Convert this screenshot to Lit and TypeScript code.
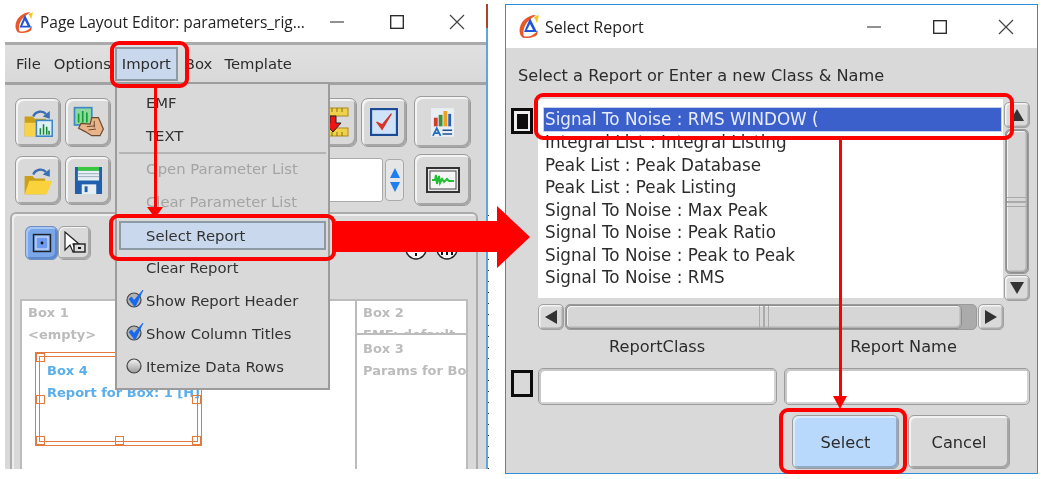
import { LitElement, html, css, svg } from "lit";
import { customElement } from "lit/decorators.js";

const logo = html`<svg class="logo" viewBox="0 0 20 23">
  <path d="M3 22C-1 18 0 10 5 5C8 2 12 0 17 0C13 3 8 6 6 11C4 15 4 19 5 23Z" fill="#e9562a"/>
  <path d="M3 20C7 23 14 22 19 15L18 20C14 23 7 24 3 22Z" fill="#e9562a"/>
  <path d="M11 3L18 17H5Z" fill="#1d55d6"/>
  <path d="M11 9L14 15H8Z" fill="#fff"/>
  <path d="M15 2L20 0L18 8Z" fill="#f6c81f"/>
</svg>`;

const folderBase = svg`<path d="M3 12h10l3 3h14v22H3Z" fill="#c9a01c"/><path d="M3 20h27v17H3Z" fill="#f7d24a"/>`;
const arc = svg`<path d="M14 12C17 5 26 4 30 9" fill="none" stroke="#3a6fb5" stroke-width="3"/><path d="M35 5v10l-9-3Z" fill="#3a6fb5"/>`;
const icFolderChart = html`<svg viewBox="0 0 40 38" width="32" height="30">${folderBase}${arc}
  <rect x="18" y="17" width="20" height="20" fill="#dff1f7" stroke="#3d87c4" stroke-width="2"/>
  <path d="M22 35V27h2v8ZM26 35V22h2v13ZM30 35V25h2v10ZM33 35V30h2v5Z" fill="#158a33"/></svg>`;
const icHand = html`<svg viewBox="0 0 40 40" width="33" height="33">
  <rect x="3" y="2" width="21" height="21" fill="#8fd8a0" stroke="#3d87c4" stroke-width="2"/>
  <path d="M7 20V9h2v11ZM12 20V6h2v14ZM17 20V8h2v12Z" fill="#12a035"/>
  <path d="M11 21L22 22L24 14H32L38 28L34 36H24L16 31L8 27Z" fill="#e9b48a" stroke="#6e4a30" stroke-width="1.5"/>
  <path d="M18 25L28 24M20 29L29 28M27 18V26" stroke="#6e4a30" stroke-width="1.2" fill="none"/></svg>`;
const icFolderOpen = html`<svg viewBox="0 0 40 38" width="32" height="30">
  <path d="M3 14h10l3 3h13v20H3Z" fill="#c9a01c"/><path d="M9 20H38L31 37H3Z" fill="#f9d23c"/>${arc}</svg>`;
const icFloppy = html`<svg viewBox="0 0 30 30" width="29" height="29">
  <path d="M1 1H29V29H1Z" fill="#1f5fae"/><rect x="4" y="1" width="22" height="4" fill="#3ac63f"/><rect x="4" y="5" width="22" height="10" fill="#e6f0f4"/>
  <path d="M4 8H26M4 11H26" stroke="#9ab" stroke-width="1"/><rect x="8" y="19" width="15" height="10" fill="#e6eef4"/><rect x="11" y="21" width="3" height="6" fill="#1f5fae"/></svg>`;
const icRuler = html`<svg viewBox="0 0 32 34" width="32" height="34">
  <rect x="0" y="3" width="30" height="8" fill="#f0d24a" stroke="#a88a20"/><rect x="0" y="23" width="30" height="8" fill="#f0d24a" stroke="#a88a20"/>
  <path d="M4 3v4M9 3v4M14 3v4M19 3v4M24 3v4M4 27v4M9 27v4M14 27v4M19 27v4M24 27v4" stroke="#8a7010"/>
  <path d="M12 11h6v7h5l-8 9-8-9h5Z" fill="#f01414" stroke="#222"/></svg>`;
const icCheck = html`<svg viewBox="0 0 30 30" width="28" height="28">
  <rect x="1" y="1" width="28" height="28" fill="#cfe3f8" stroke="#1d4a94" stroke-width="2.6"/>
  <path d="M7 15L13 23L23 6L13 18Z" fill="#d8332a" stroke="#d8332a" stroke-width="1.2"/></svg>`;
const icBars = html`<svg viewBox="0 0 24 30" width="23" height="29">
  <rect x="0" y="0" width="24" height="30" fill="#e9eef6"/>
  <rect x="3" y="10" width="4" height="9" fill="#d23b30"/><rect x="8" y="7" width="4" height="12" fill="#3f8f3a"/><rect x="13" y="3" width="4" height="16" fill="#f0a020"/><rect x="18" y="6" width="3" height="13" fill="#2b5fb4"/>
  <path d="M2 29L6 21L10 29M4 26H8" fill="none" stroke="#1f6fc0" stroke-width="1.8"/><path d="M12 23H22M12 27H22" stroke="#1f4f90" stroke-width="1.6"/></svg>`;
const icWave = html`<svg viewBox="0 0 34 26" width="34" height="26">
  <rect x="1" y="1" width="32" height="24" fill="#e8e8e8" stroke="#333" stroke-width="2"/><rect x="4" y="4" width="26" height="18" fill="#f6f6f6" stroke="#444"/>
  <path d="M6 13H9L10 8L11 17L13 9L14 16L16 12L18 15L21 12L23 14H28" fill="none" stroke="#22c030" stroke-width="2"/></svg>`;
const icBoxMode = html`<svg viewBox="0 0 20 20" width="20" height="20">
  <rect x="1.500" y="1.500" width="17" height="17" fill="none" stroke="#222" stroke-width="1.4"/><rect x="4" y="4" width="12" height="12" fill="#6d9bf0" stroke="#dfe8fb"/><circle cx="10" cy="10" r="1.4" fill="#111"/></svg>`;
const icPointer = html`<svg viewBox="0 0 24 24" width="24" height="24">
  <path d="M2 1V19L7 14L10 21L13 20L10 13H16Z" fill="#fff" stroke="#222" stroke-width="1.2"/><rect x="11" y="13" width="11" height="8" fill="#ddd" stroke="#222" stroke-width="1.4"/><rect x="15" y="16" width="3" height="2" fill="#111"/></svg>`;
const icCheckItem = html`<svg viewBox="0 0 18 18" width="18" height="18">
  <circle cx="8" cy="10" r="7" fill="#b4b4b4" stroke="#444" stroke-width="1.2"/><path d="M3 9L5.500 7L8 10.500L17 0L9 17Z" fill="#1568f0" stroke="#1568f0" stroke-width="0.8"/></svg>`;
const icRadio = html`<svg viewBox="0 0 18 18" width="18" height="18">
  <defs><linearGradient id="rg" x1="0" y1="0" x2="0" y2="1"><stop offset="0" stop-color="#f4f4f4"/><stop offset="1" stop-color="#9a9a9a"/></linearGradient></defs>
  <circle cx="8" cy="10" r="7" fill="url(#rg)" stroke="#444" stroke-width="1.2"/></svg>`;
const icCircleA = html`<svg width="22" height="22" viewBox="0 0 22 22"><circle cx="11" cy="11" r="10" fill="#f4f4f4" stroke="#222" stroke-width="1.5"/><path d="M10 3h2v9h-2ZM10 15h2v3h-2Z" fill="#111"/></svg>`;
const icCircleB = html`<svg width="22" height="22" viewBox="0 0 22 22"><circle cx="11" cy="11" r="10" fill="#f4f4f4" stroke="#222" stroke-width="1.5"/><path d="M5 13h2v4H5ZM10 11h2v6h-2ZM15 13h2v4h-2Z" fill="#111"/></svg>`;
const winMin = html`<svg width="16" height="16" viewBox="0 0 16 16"><path d="M1 8H15" stroke="#555" stroke-width="1.300"/></svg>`;
const winMax = html`<svg width="14" height="14" viewBox="0 0 14 14"><rect x=".7" y=".7" width="12.6" height="12.6" fill="none" stroke="#222" stroke-width="1.3"/></svg>`;
const winClose = html`<svg width="16" height="16" viewBox="0 0 16 16"><path d="M1 1L15 15M15 1L1 15" stroke="#444" stroke-width="1.2"/></svg>`;
const tri = (d: string) => html`<svg width="16" height="16" viewBox="0 0 16 16"><path d="${d}" fill="#333"/></svg>`;

const items = [
  "Signal To Noise : RMS WINDOW (",
  "Integral List : Integral Listing",
  "Peak List : Peak Database",
  "Peak List : Peak Listing",
  "Signal To Noise : Max Peak",
  "Signal To Noise : Peak Ratio",
  "Signal To Noise : Peak to Peak",
  "Signal To Noise : RMS",
];

@customElement("app-root")
export class AppRoot extends LitElement {
  static styles = css`
    :host { display: block; width: 1043px; height: 479px; background: #fff; position: relative; overflow: hidden;
      font-family: "DejaVu Sans", sans-serif; font-size: 16.2px; color: #2c2c2c; }
    .stage { position: absolute; inset: 0; filter: blur(0.35px); }
    .win { position: absolute; display: flex; flex-direction: column; box-sizing: border-box; background: #fff; }
    .left { left: 0; top: 0; width: 486px; height: 469px; }
    .right { left: 505px; top: 4px; width: 533px; height: 470px; border: 1.5px solid #2a8fdf; }
    .edge { position: absolute; left: 486px; top: 4px; width: 2px; height: 465px; background: #62a5dc; }
    .edge-top { position: absolute; left: 486px; top: 4px; width: 2px; height: 24px; background: #a8432c; }
    .edge-dots { position: absolute; left: 488px; top: 215px; width: 1px; height: 254px;
      background: repeating-linear-gradient(#333 0 1px, transparent 1px 11px); }
    .title { display: flex; align-items: center; box-sizing: border-box; height: 42px; flex: none; padding: 2px 0 0 15px; gap: 7px;
      font-family: "Open Sans", sans-serif; font-size: 15.5px; color: #222; }
    .left .logo { width: 18px; height: 21px; }
    .right .logo { width: 20px; height: 23px; }
    .right .title { height: 43px; padding: 0 0 0 13px; gap: 6px; font-size: 16px; }
    .title .ctl { margin-left: auto; display: flex; align-items: center; }
    .left .ctl { gap: 45px; padding-right: 21px; }
    .right .ctl { gap: 51px; padding-right: 23px; }
    .left .body { margin-left: 5px; }
    .body { flex: 1; background: #d9d9d9; display: flex; flex-direction: column; min-height: 0; }
    .menubar { display: flex; align-items: center; flex: none; box-sizing: border-box; border-top: 3px solid #aaa; border-bottom: 3px solid #a2a2a2; padding-left: 11px; height: 43px; background: linear-gradient(#e0e0e0, #d9d9d9); font-size: 14.8px; }
    .menubar span { flex: none; }
    .menubar .m1 { margin-right: 13px; }
    .menubar .hl { width: 63px; height: 34px; box-sizing: border-box; margin: 0 7px 0 4px; display: flex; align-items: center; justify-content: center; background: #c9d8ec; border: 2px solid #8e9aa6; }
    .menubar .m2 { margin-right: 12px; }
    .toolbar { display: flex; flex-direction: column; gap: 6px; padding: 11px 15px 0 10px; flex: none; }
    .trow { display: flex; align-items: center; gap: 4px; height: 52px; }
    .btn { box-sizing: border-box; width: 46px; height: 49px; display: flex; align-items: center; justify-content: center; flex: none;
      background: #d9d9d9; border: 1px solid #9c9c9c; border-radius: 7px; box-shadow: inset 2px 2px 0 #f4f4f4, inset -2px -2px 0 #a6a6a6; overflow: hidden; }
    .btn.big { width: 57px; height: 52px; margin-left: 3px; }
    .grow { flex: 1; }
    .combo { flex: 1; height: 42px; background: #fff; border: 1px solid #aaa; border-radius: 3px; margin-right: -2px; }
    .spin { width: 19px; height: 42px; box-sizing: border-box; flex: none; background: #e6e6e6; border: 1px solid #aaa; border-radius: 4px; display: flex; align-items: center; justify-content: center; margin-right: 3px; }
    .panel { margin: 6px 8px 0 5px; flex: 1; min-height: 0; box-sizing: border-box; border: 2px solid #ababab; border-bottom: 0; border-radius: 6px 6px 0 0; box-shadow: inset 2px 2px 0 #eee; padding: 12px 8px 0 8px; display: flex; flex-direction: column; position: relative; }
    .toggles { display: flex; flex: none; height: 34px; padding-left: 5px; gap: 0; }
    .tg { box-sizing: border-box; width: 33px; height: 34px; display: flex; align-items: center; justify-content: center; border: 1px solid #a0a0a0; border-radius: 6px; background: #d9d9d9; box-shadow: inset 1px 1px 0 #f4f4f4, inset -2px -2px 0 #aaa; }
    .tg.on { background: #79a7ea; border-color: #6d8fc4; box-shadow: inset 2px 2px 0 #a6c6f4, inset -2px -2px 0 #5d88c8; }
    .circles { position: absolute; top: 24px; right: 18px; display: flex; gap: 9px; }
    .sheet { margin-top: 39px; flex: 1; min-height: 0; background: #fff; border: 2px solid #bcbcbc; border-bottom: 0; display: grid; grid-template-columns: 1fr 111px; position: relative; font-size: 13px; font-weight: 700; color: #bcbcbc; }
    .cell { padding: 1px 0 0 6px; line-height: 22px; overflow: hidden; white-space: nowrap; }
    .cell p { margin: 0; }
    .col { border-left: 2px solid #bcbcbc; display: flex; flex-direction: column; min-height: 0; }
    .c2 { height: 34px; flex: none; box-sizing: border-box; border-bottom: 2px solid #bcbcbc; padding-left: 6px; }
    .c3 { flex: 1; padding: 3px 0 0 6px; }
    .box4 { position: absolute; left: 13px; top: 51px; width: 167px; height: 94px; box-sizing: border-box; border: 1.4px solid #e07a40; outline: 1.4px solid #e07a40; outline-offset: -5.5px; padding: 7px 0 0 11px; color: #5aaeea; line-height: 22px; overflow: hidden; white-space: nowrap; }
    .box4 p { margin: 0; }
    .h { position: absolute; width: 9px; height: 9px; box-sizing: border-box; border: 1.2px solid #e07a40; }
    .menu { position: absolute; left: 115px; top: 82px; width: 215px; height: 308px; box-sizing: border-box; background: #d9d9d9; border: 2px solid #9c9c9c; padding: 2px 2px 3px; display: flex; flex-direction: column; color: #333; font-size: 14.8px; }
    .mi { height: 33px; flex: none; display: flex; align-items: center; padding-left: 27px; position: relative; box-sizing: border-box; }
    .mi.off { color: #a4a4a4; }
    .mi.sel { background: #c9d8ec; border: 2px solid #8e9aa6; padding-left: 25px; height: 29px; margin: 3px 0 1px; }
    .mi svg { position: absolute; left: 7px; top: 6px; }
    .sep { height: 2px; background: #b4b4b4; margin: 0 0 -2px; flex: none; }

    .pad { padding: 13px 5px 0 5px; flex: 1; display: flex; flex-direction: column; min-height: 0; }
    .lbl { height: 30px; flex: none; padding-left: 7px; line-height: 30px; }
    .rw { display: flex; gap: 3px; flex: none; }
    .listrow { margin-top: 8px; }
    .mark { flex: none; width: 22px; box-sizing: border-box; border: 3.5px solid #0c0c0c; background: #d9d9d9; }
    .mark.fill { height: 26px; margin-top: 9px; padding: 2.5px; background: #eee; }
    .mark.fill i { display: block; width: 100%; height: 100%; background: #0c0c0c; }
    .mark.e { height: 27px; margin-top: 9px; }
    .listwrap { display: grid; grid-template-columns: 1fr 27px; width: 493px; margin-left: 2px; height: 228px; font-size: 16.8px; }
    .list { height: 199px; background: #fff; box-sizing: border-box; padding: 9px 2px 0 6px; margin-right: 1px; overflow: hidden; }
    .row { height: 22.55px; line-height: 22.5px; white-space: nowrap; text-indent: 1px; }
    .row.s { background: #3c60cb; color: #e8ecfa; height: 23px; box-shadow: 0 0 0 1px #c6d2ef; }
    .vs { display: flex; flex-direction: column; gap: 1px; height: 199px; margin-top: 3px; }
    .hs { display: flex; gap: 1px; height: 26px; grid-column: 1; margin-top: 3px; }
    .sb { box-sizing: border-box; flex: none; width: 26px; height: 26px; display: flex; align-items: center; justify-content: center; background: #d9d9d9; border: 1px solid #a0a0a0; border-radius: 5px; box-shadow: inset 1.5px 1.5px 0 #f4f4f4, inset -1.5px -1.5px 0 #aaa; }
    .track { flex: 1; box-sizing: border-box; background: #ababab; border: 1px solid #9a9a9a; border-radius: 5px; display: flex; }
    .vs .track { width: 24px; margin-left: 1px; flex-direction: column; }
    .hs .thumb { margin-right: 14px; }
    .thumb { flex: 1; background: #d6d6d6; border: 1px solid #8e8e8e; border-radius: 5px; box-shadow: inset 1px 1px 0 #f4f4f4, inset -1.5px -1.5px 0 #b2b2b2; display: flex; align-items: center; justify-content: center; box-sizing: border-box; }
    .grip-v { width: 8px; height: 100%; border-left: 1px solid #aaa; border-right: 1px solid #aaa; background: linear-gradient(90deg, transparent 40%, #aaa 40% 60%, transparent 60%); }
    .grip-h { width: 100%; height: 8px; border-top: 1px solid #aaa; border-bottom: 1px solid #aaa; background: linear-gradient(transparent 40%, #aaa 40% 60%, transparent 60%); }
    .heads { display: flex; flex: none; height: 34px; margin-left: 28px; align-items: flex-end; }
    .heads span { text-align: center; line-height: 28px; }
    .heads span:nth-child(1) { width: 239px; }
    .heads span:nth-child(2) { width: 260px; }
    .fields { display: flex; gap: 7px; height: 37px; flex: none; margin: 7px 0 0 2px; }
    .field { box-sizing: border-box; height: 37px; background: #fff; border: 1px solid #9c9c9c; border-radius: 5px; box-shadow: inset 2px 2px 0 #c8c8c8, inset -2px -2px 0 #d4d4d4; }
    .field.a { width: 239px; }
    .field.b { width: 246px; }
    .actions { display: flex; gap: 9px; margin-top: 10px; padding-left: 281px; flex: none; }
    .act { box-sizing: border-box; height: 54px; width: 107px; display: flex; align-items: center; justify-content: center; background: #d9d9d9; border: 1px solid #9c9c9c; border-radius: 6px; box-shadow: inset 2px 2px 0 #f2f2f2, inset -2px -2px 0 #a6a6a6; }
    .act.p { background: #b9d9fc; box-shadow: inset 2px 2px 0 #dbeafd, inset -2px -2px 0 #94a9c2; }
    .act.c { width: 102px; }

    .over { position: absolute; inset: 0; pointer-events: none; }
    .rbox { position: absolute; box-sizing: border-box; border: 4.5px solid #ff0000; border-radius: 9px; }
    .rline { position: absolute; background: #ff0000; }
    .rsvg { position: absolute; left: 0; top: 0; }
    .rb1 { left: 110px; top: 41px; width: 79px; height: 47px; }
    .rb2 { left: 109px; top: 214px; width: 227px; height: 47px; }
    .rb3 { left: 534px; top: 93px; width: 480px; height: 47px; }
    .rb4 { left: 779px; top: 408px; width: 128px; height: 66px; }
    .rl1 { left: 154px; top: 88px; width: 3px; height: 122px; }
    .rl2 { left: 838.5px; top: 140px; width: 3px; height: 260px; }
  `;

  render() {
    const h4 = (l: number, t: number) => html`<i class="h" style="left:${l}px;top:${t}px"></i>`;
    return html`<div class="stage">
      <section class="win left">
        <header class="title">${logo}<span>Page Layout Editor: parameters_rig...</span>
          <span class="ctl">${winMin}${winMax}${winClose}</span></header>
        <div class="body">
          <nav class="menubar"><span class="m1">File</span><span>Options</span><span class="hl">Import</span><span class="m2">Box</span><span>Template</span></nav>
          <div class="toolbar">
            <div class="trow"><div class="btn">${icFolderChart}</div><div class="btn">${icHand}</div><div class="grow"></div>
              <div class="btn">${icRuler}</div><div class="btn">${icCheck}</div><div class="btn big">${icBars}</div></div>
            <div class="trow"><div class="btn">${icFolderOpen}</div><div class="btn">${icFloppy}</div><div class="combo"></div>
              <div class="spin"><svg width="12" height="26" viewBox="0 0 12 26"><path d="M6 1L11 11H1ZM6 25L1 15H11Z" fill="#1f7ff0"/></svg></div><div class="btn big">${icWave}</div></div>
          </div>
          <div class="panel">
            <div class="toggles"><div class="tg on">${icBoxMode}</div><div class="tg">${icPointer}</div></div>
            <div class="circles">${icCircleA}${icCircleB}</div>
            <div class="sheet">
              <div class="cell"><p>Box 1</p><p>&lt;empty&gt;</p></div>
              <div class="col">
                <div class="cell c2"><p>Box 2</p><p>EMF: default</p></div>
                <div class="cell c3"><p>Box 3</p><p>Params for Box</p></div>
              </div>
              <div class="box4"><p>Box 4</p><p>Report for Box: 1 [H]</p>
                ${h4(0, 0)}${h4(0, 42)}${h4(156, 42)}${h4(0, 83)}${h4(79, 83)}${h4(156, 83)}</div>
            </div>
          </div>
        </div>
      </section>
      <div class="edge"></div><div class="edge-top"></div><div class="edge-dots"></div>

      <div class="menu">
        <div class="mi">EMF</div><div class="mi">TEXT</div><div class="sep"></div>
        <div class="mi off">Open Parameter List</div><div class="mi off">Clear Parameter List</div>
        <div class="mi sel">Select Report</div><div class="mi">Clear Report</div>
        <div class="mi">${icCheckItem}Show Report Header</div>
        <div class="mi">${icCheckItem}Show Column Titles</div>
        <div class="mi">${icRadio}Itemize Data Rows</div>
      </div>

      <section class="win right">
        <header class="title">${logo}<span>Select Report</span><span class="ctl">${winMin}${winMax}${winClose}</span></header>
        <div class="body"><div class="pad">
          <div class="lbl">Select a Report or Enter a new Class &amp; Name</div>
          <div class="rw listrow">
            <div class="mark fill"><i></i></div>
            <div class="listwrap">
              <div class="list">${items.map((t, i) => html`<div class="row ${i === 0 ? "s" : ""}">${t}</div>`)}</div>
              <div class="vs"><div class="sb">${tri("M8 2L15 14H1Z")}</div><div class="track"><div class="thumb"><div class="grip-h"></div></div></div><div class="sb">${tri("M8 14L1 2H15Z")}</div></div>
              <div class="hs"><div class="sb">${tri("M2 8L14 1V15Z")}</div><div class="track"><div class="thumb"><div class="grip-v"></div></div></div><div class="sb">${tri("M14 8L2 1V15Z")}</div></div>
            </div>
          </div>
          <div class="heads"><span>ReportClass</span><span>Report Name</span></div>
          <div class="rw">
            <div class="mark e"></div>
            <div class="fields"><div class="field a"></div><div class="field b"></div></div>
          </div>
          <div class="actions"><div class="act p">Select</div><div class="act c">Cancel</div></div>
        </div></div>
      </section>

      <div class="over">
        <div class="rbox rb1"></div>
        <div class="rbox rb2"></div>
        <div class="rbox rb3"></div>
        <div class="rbox rb4"></div>
        <div class="rline rl1"></div>
        <div class="rline rl2"></div>
        <svg class="rsvg" width="1043" height="479">
          <path d="M147 207H163L155 218Z" fill="#ff0000"/>
          <path d="M833 396H847L840 409Z" fill="#ff0000"/>
          <path d="M336 221H497V206L530 237L497 268V252H336Z" fill="#ff0000"/>
        </svg>
      </div>
    </div>`;
  }
}
